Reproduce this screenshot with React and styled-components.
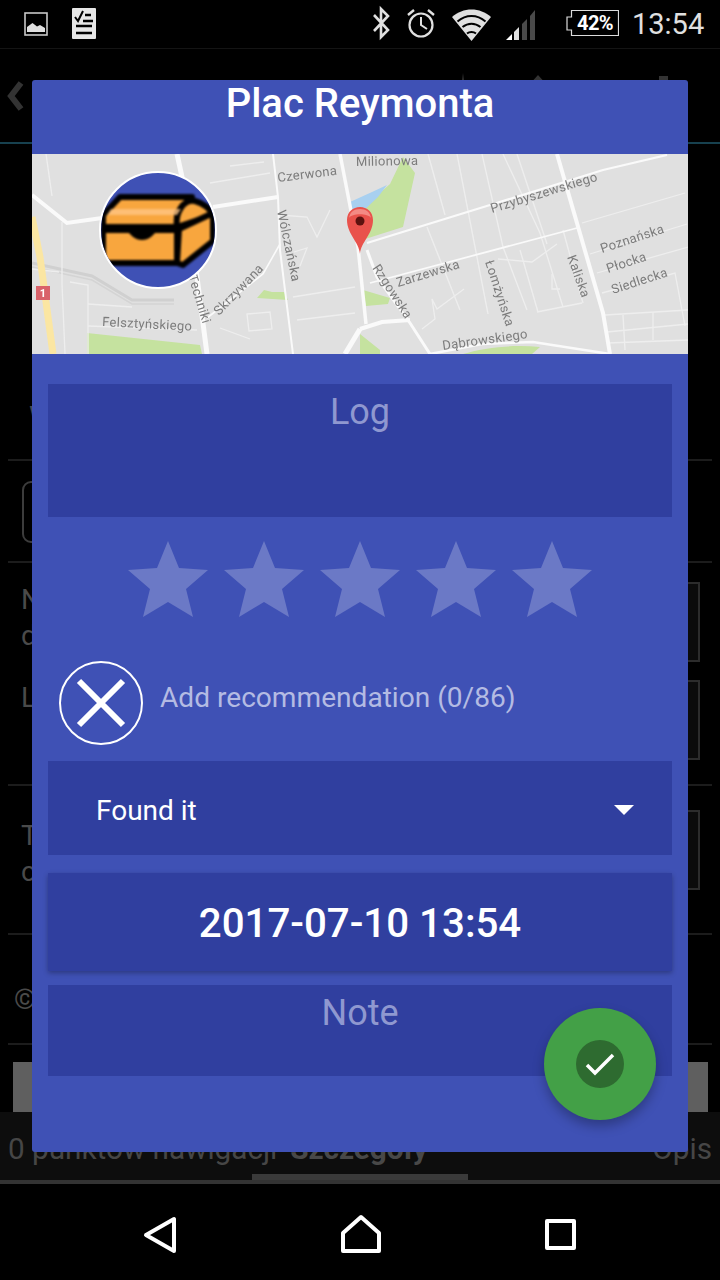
import React from "react";
import styled, { createGlobalStyle } from "styled-components";

const Global = createGlobalStyle`
  html, body { margin: 0; padding: 0; background: #000; }
  * { box-sizing: border-box; }
  body { font-family: Roboto, "Liberation Sans", sans-serif; }
`;

const Screen = styled.div`
  position: relative; width: 720px; height: 1280px; overflow: hidden;
  background: #000; display: flex; flex-direction: column;
`;

/* ---------- status bar ---------- */
const StatusBar = styled.div`
  height: 49px; flex: none; display: flex; align-items: flex-start; padding: 0 17px 0 24px;
  border-bottom: 1px solid #141414;
`;
const StatusIcon = styled.svg`
  display: block; height: 48px; flex: none; margin-left: ${p => p.$gap || 0}px;
`;
const Clock = styled.div`
  margin-left: 13px; font-size: 29px; line-height: 48px; color: #e0e0e0; width: 71px; white-space: nowrap;
`;
const Spacer = styled.div`flex: 1;`;

/* ---------- dimmed app behind the dialog ---------- */
const AppBar = styled.div`
  height: 95px; flex: none; display: flex; border-bottom: 2px solid #17414f; padding-right: 44px;
`;
const ToolIcon = styled.svg`
  display: block; height: 93px; flex: none; margin-left: ${p => p.$gap || 0}px;
`;
const Content = styled.div`
  height: 968px; flex: none; display: flex; flex-direction: column;
`;
const Section = styled.div`
  height: ${p => p.$h}px; flex: none; margin: 0 8px; border-bottom: 2px solid #1c1c1c;
  padding: ${p => p.$pad || "0"}; display: flex; flex-direction: column;
  justify-content: ${p => p.$end ? "flex-end" : "flex-start"};
`;
const Faded = styled.div`
  color: #4a4a4a; font-size: 28px; line-height: 36px;
  margin-left: ${p => p.$ml || 0}px; margin-top: ${p => p.$mt || 0}px;
`;
const Row = styled.div`
  display: flex; justify-content: space-between; align-items: flex-start;
  margin-top: ${p => p.$mt || 0}px;
`;
const Thumb = styled.div`
  width: 120px; height: 80px; background: #0b0b0b; border: 2px solid #2c2c2c; margin-right: 12px;
`;
const Outline = styled.div`
  width: 60px; height: 62px; border: 2px solid #3c3c3c; border-radius: 9px; margin-left: 14px;
`;
const GreyBlock = styled.div`
  height: 50px; flex: none; margin: 17px 12px 0 13px; background: #5f5f5f;
`;
const TabBar = styled.div`
  height: 68px; flex: none; background: #0d0d0d; display: flex; align-items: flex-end;
  padding: 0 8px 13px 8px; justify-content: space-between; font-size: 29.7px; line-height: 36px; color: #464646;
`;
const TabStrong = styled.span`
  font-weight: 700; color: #484848; margin-left: 13px;
`;
const TabLine = styled.div`
  height: 4px; flex: none; background: #333; position: relative;
`;
const TabIndicator = styled.div`
  position: absolute; left: 252px; top: -6px; width: 216px; height: 6px; background: #3a3a3a;
`;
const NavBar = styled.div`
  height: 96px; flex: none; background: #000; display: flex; padding-left: 140px;
`;
const NavIcon = styled.svg`
  display: block; height: 96px; flex: none; margin-left: ${p => p.$gap || 0}px;
`;

/* ---------- dialog ---------- */
const Dialog = styled.div`
  position: absolute; left: 32px; top: 80px; width: 656px; height: 1072px;
  background: #3f51b5; border-radius: 3px; display: flex; flex-direction: column;
`;
const Title = styled.div`
  height: 74px; text-align: center; color: #fff; font-size: 40px; font-weight: 500; line-height: 48px;
`;
const MapBox = styled.div`
  position: relative; height: 200px; background: #e0e0e0; overflow: hidden; flex: none;
`;
const MapArt = styled.svg`
  display: block; width: 656px; height: 200px; filter: blur(0.6px);
`;
const Avatar = styled.div`
  position: absolute; left: 67px; top: 17px; width: 118px; height: 118px; border-radius: 50%;
  background: #3f51b5; border: 2px solid #fff; overflow: hidden;
`;
const ChestArt = styled.svg`
  display: block; width: 114px; height: 114px; filter: blur(1.1px);
`;
const Body = styled.div`
  flex: 1; padding: 30px 16px 0; display: flex; flex-direction: column;
`;
const Field = styled.div`
  height: ${p => p.$h}px; margin-top: ${p => p.$mt || 0}px; background: #303f9f;
  text-align: center; color: #8f98d0; font-size: 36px; line-height: 56px; flex: none;
`;
const Stars = styled.div`
  display: flex; justify-content: center; gap: 16px; margin: 24px 0 44px;
`;
const Star = styled.svg`
  display: block; width: 80px; height: 76px; fill: #6b79c6;
`;
const Recommend = styled.div`
  display: flex; align-items: center; gap: 17px; padding: 0 0 0 11px; height: 84px;
  color: #b4bbe3; font-size: 28.1px;
`;
const RecommendText = styled.span`
  margin-top: -12px;
`;
const CloseRound = styled.svg`
  display: block; width: 84px; height: 84px; flex: none;
`;
const Select = styled.div`
  height: 94px; margin-top: 16px; background: #303f9f; display: flex; align-items: center;
  justify-content: space-between; padding: 4px 38px 0 48px; color: #fff; font-size: 28px;
`;
const Caret = styled.div`
  width: 0; height: 0; border-left: 10px solid transparent; border-right: 10px solid transparent;
  border-top: 10px solid #fff;
`;
const DateBox = styled.div`
  height: 98px; margin-top: 18px; background: #303f9f; box-shadow: 0 2px 5px rgba(0,0,0,.3);
  text-align: center; color: #fff; font-size: 40.25px; font-weight: 500; line-height: 102px;
`;
const Fab = styled.div`
  position: absolute; left: 512px; top: 928px; width: 112px; height: 112px; border-radius: 50%;
  background: #43a047; box-shadow: 0 6px 12px rgba(0,0,0,.28); display: flex;
  align-items: center; justify-content: center;
`;
const FabInner = styled.div`
  width: 48px; height: 48px; border-radius: 50%; background: #2e6b30;
`;
const Check = styled.svg`
  display: block; width: 48px; height: 48px;
`;

const thin = [
  "M14 0L20 42","M30 68L30 130L33 200","M0 115L27 118","M38 128L56 131L56 200","M56 150L100 153",
  "M56 172L165 176","M261 143L323 133","M265 166L323 159","M248 61L275 63L285 83L298 56",
  "M262 98L275 94L268 112","M178 29L238 19","M198 12L232 8","M215 160L238 158L240 175L217 177Z","M188 174L218 185",
  "M425 0L456 160","M396 0L413 61","M395 73L428 156","M450 0L471 93L495 156","M471 0L508 79L531 153",
  "M485 0L515 90","M505 158L550 149","M488 96L506 158","M531 76L551 149","M550 69L653 39","M558 100L655 70",
  "M565 119L656 93","M570 139L643 119L653 172","M573 161L656 156","M575 178L656 170","M576 189L656 186",
  "M591 161L593 196","M621 158L621 186","M390 175L403 165L400 145L405 155L432 135",
  "M466 105L500 108L525 90","M520 120L520 135L528 135",
];
const labels = [
  ["Czerwona", 246, 28, -7],
  ["Milionowa", 324, 12, -1],
  ["Wólczańska", 245, 57, 78],
  ["Skrzywana", 187, 162, -46],
  ["Felsztyńskiego", 70, 172, 3],
  ["Techniki", 156, 122, 73],
  ["Przybyszewskiego", 460, 59, -17],
  ["Zarzewska", 366, 133, -17],
  ["Rzgowska", 340, 114, 57],
  ["Łomżyńska", 453, 108, 72],
  ["Kaliska", 535, 103, 70],
  ["Poznańska", 570, 99, -18],
  ["Płocka", 576, 119, -18],
  ["Siedlecka", 581, 140, -18],
  ["Dąbrowskiego", 411, 196, -8],
];

const MapPicture = () => (
  <MapArt viewBox="0 0 656 200">
    <rect width="656" height="200" fill="#e0e0e0" />
    <path d="M371 3L383 19L371 73L330 86L332 53L358 30Z" fill="#c5e29f" />
    <path d="M318 48L340 38L355 31L346 43L328 60L318 60Z" fill="#a8d0f0" />
    <path d="M55 179L168 191L170 200L55 200Z" fill="#c5e29f" />
    <path d="M225 144L232 136L240 138L252 138L256 146Z" fill="#c5e29f" />
    <path d="M431 200C450 194 480 190 508 193L500 200Z" fill="#c5e29f" />
    <path d="M328 180L348 196L348 200L328 200Z" fill="#c5e29f" />
    <path d="M331 136L358 144L356 150L334 152Z" fill="#c5e29f" />
    <path d="M0 109L60 122L100 146L142 146" fill="none" stroke="#d0d0d0" strokeWidth="3" />
    <path d="M0 113L60 126L100 150L142 150" fill="none" stroke="#d4d4d4" strokeWidth="1.5" />
    <g fill="none" stroke="#eeeeee" strokeWidth="1.3">
      {thin.map(d => <path key={d} d={d} />)}
    </g>
    <g fill="none" stroke="#fafafa">
      <path d="M0 41L35 69L70 64M181 53L246 43" strokeWidth="4" />
      <path d="M145 0L155 46L165 123L175 200" strokeWidth="5" />
      <path d="M241 0L246 43L248 96L261 200" strokeWidth="2" />
      <path d="M175 164L231 120L248 90" strokeWidth="1.6" />
      <path d="M308 0L326 93L334 170" strokeWidth="3.500" />
      <path d="M335 96L345 123L378 169L398 200" strokeWidth="3" />
      <path d="M335 89L458 51L571 16L635 1" strokeWidth="2.200" />
      <path d="M338 129L545 74" strokeWidth="1.800" />
      <path d="M525 0L571 159L578 200" strokeWidth="4" />
      <path d="M398 200L450 190L501 188L578 200" strokeWidth="2.500" />
      <path d="M328 175L350 168L378 166" strokeWidth="4" />
      <path d="M313 200L328 175" strokeWidth="5" />
    </g>
    <path d="M0 63L8 103L21 200" fill="none" stroke="#fbe6a2" strokeWidth="7" />
    <rect x="4" y="132" width="14" height="14" fill="#d9626a" />
    <text x="11" y="143" fontSize="11" fontWeight="700" textAnchor="middle" fill="#fff" fontFamily="Roboto, sans-serif">1</text>
    <g fontFamily="Roboto, sans-serif" fontSize="13" fill="#7c7c7c" letterSpacing=".3">
      {labels.map(([t, x, y, r]) => (
        <text key={t} x={x} y={y} transform={`rotate(${r} ${x} ${y})`}>{t}</text>
      ))}
    </g>
    <path d="M328 100C327 88 315 80 315 66C315 58 321 53 328 53C335 53 341 58 341 66C341 80 329 88 328 100Z" fill="#e9524c" />
    <path d="M317 64C318 58 322 55 328 55C334 55 338 58 339 64C336 59 320 59 317 64Z" fill="#f48a84" />
    <circle cx="328" cy="67" r="4.500" fill="#5c120f" />
  </MapArt>
);

const ChestPicture = () => (
  <ChestArt viewBox="0 0 114 114">
    <g stroke="#000" strokeWidth="6" strokeLinejoin="round">
      <path d="M19 24L91 24L76 40L76 54L2 54L2 42Z" fill="#f8a63e" />
      <path d="M76 54C74 40 82 26 94 28C102 30 110 36 112 42Z" fill="#f8a63e" />
      <path d="M2 57L76 57L76 90L2 90Z" fill="#f8a63e" />
      <path d="M78 56L112 40L112 68L82 92L76 90Z" fill="#f8a63e" />
    </g>
    <path d="M10 36L80 36L76 42L6 42Z" fill="#ffc685" opacity=".8" />
    <path d="M24 55L58 55C52 63 48 67 41 67C34 67 30 63 24 55Z" fill="#000" />
  </ChestArt>
);

const App = () => (
  <Screen>
    <Global />
    <StatusBar>
      <StatusIcon width="24" viewBox="0 0 24 48">
        <rect x="1" y="13" width="22" height="22" fill="none" stroke="#c8c8c8" strokeWidth="1.6" />
        <path d="M3 32L3 27L8.500 23L13 26.500L16 25L21 28L21 32Z" fill="#e0e0e0" />
      </StatusIcon>
      <StatusIcon width="24" viewBox="0 0 24 48" $gap={24}>
        <path d="M1 8H23Q24 8 24 9V38Q24 39 23 39H1Q0 39 0 38V9Q0 8 1 8Z" fill="#e6e6e6" />
        <path d="M3 17L6 21L11 11" fill="none" stroke="#000" strokeWidth="2" />
        <path d="M13 15H19M11 21H21M4 26H20M4 33H20" stroke="#000" strokeWidth="2.400" fill="none" />
      </StatusIcon>
      <Spacer />
      <StatusIcon width="18" viewBox="0 0 18 48">
        <path d="M2 15L16 30L9 37V9L16 16L2 31" fill="none" stroke="#e0e0e0" strokeWidth="2.600" />
      </StatusIcon>
      <StatusIcon width="28" viewBox="0 0 28 48" $gap={17}>
        <circle cx="14" cy="25" r="11.500" fill="none" stroke="#e0e0e0" strokeWidth="2.200" />
        <path d="M14 17V25L20 29" fill="none" stroke="#e0e0e0" strokeWidth="2" />
        <path d="M1 15L7 10M27 15L21 10" stroke="#e0e0e0" strokeWidth="2.400" />
      </StatusIcon>
      <StatusIcon width="39" viewBox="0 0 39 48" $gap={17}>
        <path d="M0 17C11 7 28 7 39 17L19.500 41Z" fill="#e0e0e0" />
        <path d="M5.500 21.500C14 14 25 14 33.500 21.500M10.500 27C16 22.500 23 22.500 28.500 27" fill="none" stroke="#000" strokeWidth="2" />
        <path d="M15 33.500C17.500 31.500 21.500 31.500 24 33.500" fill="none" stroke="#000" strokeWidth="2" />
      </StatusIcon>
      <StatusIcon width="30" viewBox="0 0 30 48" $gap={15}>
        <path d="M0 40L6 34V40Z" fill="#fff" />
        <path d="M8 40V32L13 27V40Z" fill="#e0e0e0" />
        <path d="M16 40V24L21 19V40Z" fill="#4a4a4a" />
        <path d="M24 40V16L29 10V40Z" fill="#4a4a4a" />
      </StatusIcon>
      <StatusIcon width="53" viewBox="0 0 53 48" $gap={30}>
        <path d="M5.500 10.500H52.500V35.500H5.500V30H1V17H5.500Z" fill="none" stroke="#dcdcdc" strokeWidth="1.200" />
        <text x="29" y="30" textAnchor="middle" fontSize="20" fontWeight="700" fill="#fff" letterSpacing="-.6" fontFamily="Roboto, sans-serif">42%</text>
      </StatusIcon>
      <Clock>13:54</Clock>
    </StatusBar>

    <AppBar>
      <ToolIcon width="30" viewBox="0 0 30 93">
        <path d="M21 34L11 47L21 60" fill="none" stroke="#333" strokeWidth="6" />
      </ToolIcon>
      <Spacer />
      <ToolIcon width="26" viewBox="0 0 26 93">
        <path d="M13 24L15 40H11Z" fill="#333" />
      </ToolIcon>
      <ToolIcon width="26" viewBox="0 0 26 93" $gap={49}>
        <path d="M13 26L22 36H4Z" fill="#333" />
      </ToolIcon>
      <ToolIcon width="26" viewBox="0 0 26 93" $gap={99}>
        <rect x="9" y="27" width="9" height="12" fill="#333" />
      </ToolIcon>
    </AppBar>

    <Content>
      <Section $h={317} $end $pad="0 0 24px">
        <Faded $ml={21}>W</Faded>
      </Section>
      <Section $h={102} $pad="20px 0 0">
        <Outline />
      </Section>
      <Section $h={223} $pad="19px 0 0">
        <Row>
          <Faded $ml={13}>N<br />d</Faded>
          <Thumb />
        </Row>
        <Row $mt={18}>
          <Faded $ml={13}>L</Faded>
          <Thumb />
        </Row>
      </Section>
      <Section $h={149} $pad="24px 0 0">
        <Row>
          <Faded $ml={13} $mt={8}>T<br />c</Faded>
          <Thumb />
        </Row>
      </Section>
      <Section $h={110} $pad="47px 0 0">
        <Faded $ml={6}>©</Faded>
      </Section>
      <GreyBlock />
    </Content>

    <TabBar>
      <span>0 punktów nawigacji<TabStrong>Szczegóły</TabStrong></span>
      <span>Opis</span>
    </TabBar>
    <TabLine><TabIndicator /></TabLine>

    <NavBar>
      <NavIcon width="40" viewBox="0 0 40 96">
        <path d="M34 35V67L6 51Z" fill="none" stroke="#fff" strokeWidth="4" strokeLinejoin="round" />
      </NavIcon>
      <NavIcon width="44" viewBox="0 0 44 96" $gap={159}>
        <path d="M4 67V49L22 33L40 49V67Z" fill="none" stroke="#fff" strokeWidth="4" strokeLinejoin="round" />
      </NavIcon>
      <NavIcon width="36" viewBox="0 0 36 96" $gap={159}>
        <rect x="5" y="37" width="27" height="27" fill="none" stroke="#fff" strokeWidth="4" strokeLinejoin="round" />
      </NavIcon>
    </NavBar>

    <Dialog>
      <Title>Plac Reymonta</Title>
      <MapBox>
        <MapPicture />
        <Avatar><ChestPicture /></Avatar>
      </MapBox>
      <Body>
        <Field $h={133}>Log</Field>
        <Stars>
          {[0, 1, 2, 3, 4].map(i => (
            <Star key={i} viewBox="0 0 80 76">
              <path d="M40 0L51 27L80 29L58 48L65 76L40 61L15 76L22 48L0 29L29 27Z" />
            </Star>
          ))}
        </Stars>
        <Recommend>
          <CloseRound viewBox="0 0 84 84">
            <circle cx="42" cy="42" r="41" fill="none" stroke="#fff" strokeWidth="2" />
            <path d="M20 20L64 64M64 20L20 64" stroke="#fff" strokeWidth="6" />
          </CloseRound>
          <RecommendText>Add recommendation (0/86)</RecommendText>
        </Recommend>
        <Select>Found it<Caret /></Select>
        <DateBox>2017-07-10 13:54</DateBox>
        <Field $h={91} $mt={14}>Note</Field>
      </Body>
      <Fab>
        <FabInner>
          <Check viewBox="0 0 48 48">
            <path d="M11 25L19 33L37 15" fill="none" stroke="#fff" strokeWidth="3.500" />
          </Check>
        </FabInner>
      </Fab>
    </Dialog>
  </Screen>
);

export default App;
